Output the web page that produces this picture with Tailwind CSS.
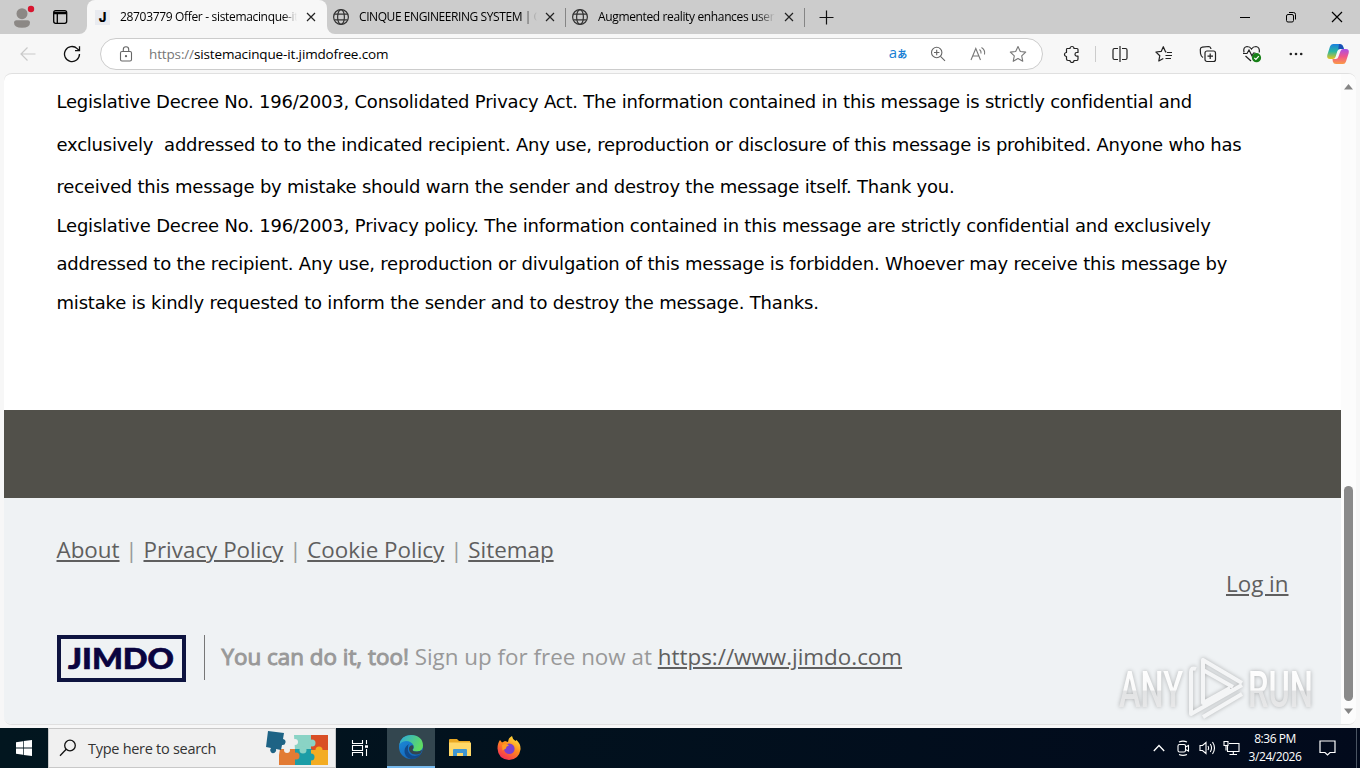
<!DOCTYPE html>
<html lang="en">
<head>
  <meta charset="UTF-8">
  <meta name="viewport" content="width=device-width, initial-scale=1.0">
  <title>28703779 Offer - sistemacinque-it</title>
  <script src="https://cdn.jsdelivr.net/npm/@tailwindcss/browser@4"></script>
</head>
<body class="w-[1360px] h-[768px] overflow-hidden flex flex-col bg-[#f7f7f7] font-['Open_Sans',sans-serif] text-black">

  <!-- shared icons -->
  <svg width="0" height="0" class="absolute">
    <symbol id="globe" viewBox="0 0 18 18"><g fill="none" stroke="#333" stroke-width="1.2"><circle cx="9" cy="9" r="7.4"/><ellipse cx="9" cy="9" rx="3.4" ry="7.4"/><path d="M2.3 6.2h13.4M2.3 11.8h13.4"/></g></symbol>
    <symbol id="close" viewBox="0 0 10 10"><path d="M1 1l8 8M9 1l-8 8" stroke="#222" stroke-width="1.2" fill="none"/></symbol>
  </svg>

  <!-- tab strip -->
  <div class="h-[34px] flex shrink-0 bg-[#f7f7f7] text-[12px]">
    <div class="w-[87px] bg-[#ccc] rounded-br-lg flex items-center pl-2.5">
      <svg width="26" height="26" viewBox="0 0 26 26"><circle cx="12" cy="9.7" r="5.5" fill="#8c8885"/><path d="M4 18.700q0-2.500 2.500-2.500h11q2.500 0 2.500 2.500 0 5-8 5t-8-5z" fill="#8c8885"/><circle cx="21" cy="5" r="3.200" fill="#d8152f"/></svg>
      <svg class="ml-4" width="16" height="16" viewBox="0 0 16 16" fill="none" stroke="#000" stroke-width="1.300"><rect x="1.700" y="1.700" width="13" height="12.600" rx="2"/><path d="M2 3.300h12.500M2 4.600h12.500M5.300 5v9"/></svg>
    </div>
    <div class="w-[240px] bg-[#ccc]">
      <div class="h-full bg-[#f7f7f7] rounded-t-lg flex items-center pl-2">
        <div class="size-[15px] bg-[#e9ebf0] font-extrabold text-[13px] leading-[14px] text-center font-['Inter',sans-serif]">J</div>
        <div class="ml-2.5 w-[177px] overflow-hidden whitespace-nowrap tracking-[-0.33px] mask-r-from-92%">28703779 Offer - sistemacinque-it</div>
        <svg class="ml-[9px]" width="10" height="10"><use href="#close"/></svg>
      </div>
    </div>
    <div class="flex-1 bg-[#ccc] rounded-bl-lg flex items-center">
      <svg class="ml-[5px]" width="18" height="18"><use href="#globe"/></svg>
      <div class="ml-[9px] w-[178px] overflow-hidden whitespace-nowrap tracking-[-0.42px] mask-r-from-92%">CINQUE ENGINEERING SYSTEM | O</div>
      <svg class="ml-2" width="10" height="10"><use href="#close"/></svg>
      <div class="ml-2.5 w-px h-[19px] bg-[#858585]"></div>
      <svg class="ml-[5px]" width="18" height="18"><use href="#globe"/></svg>
      <div class="ml-[9px] w-[177px] overflow-hidden whitespace-nowrap tracking-[-0.36px] mask-r-from-90%">Augmented reality enhances user</div>
      <svg class="ml-[9px]" width="10" height="10"><use href="#close"/></svg>
      <div class="ml-2.5 w-px h-[19px] bg-[#858585]"></div>
      <svg class="ml-[14px]" width="15" height="15" stroke="#111" stroke-width="1.200"><path d="M7.500 .5v14M.5 7.500h14"/></svg>
      <div class="ml-auto flex">
        <div class="w-[46px] flex justify-center"><svg width="12" height="12" stroke="#000" fill="none"><path d="M1 6.500h10"/></svg></div>
        <div class="w-[46px] flex justify-center"><svg width="12" height="12" stroke="#000" fill="none"><rect x="1.500" y="3.500" width="7" height="7.500" rx="1.500"/><path d="M4 1.500h4.500q2 0 2 2v5"/></svg></div>
        <div class="w-[46px] flex justify-center"><svg width="12" height="12" stroke="#000" stroke-width="1.200"><path d="M1 1l10 10M11 1L1 11"/></svg></div>
      </div>
    </div>
  </div>

  <!-- address bar -->
  <div class="h-[39px] shrink-0 flex items-center pl-1.5">
    <div class="w-11 flex justify-center"><svg width="18" height="16" viewBox="0 0 18 16" fill="none" stroke="#c9c9c9" stroke-width="1.200"><path d="M16.500 8H2M8.500 1.500L2 8l6.500 6.500"/></svg></div>
    <div class="w-11 flex justify-center"><svg width="18" height="18" viewBox="0 0 18 18" fill="none" stroke="#111" stroke-width="1.300"><path d="M16.500 9a7.500 7.500 0 1 1-2.300-5.400l2 2M16.500 1.200v4.500h-4.500"/></svg></div>
    <div class="ml-1.5 w-[943px] shrink-0 h-8 rounded-full border border-[#ccc] bg-white flex items-center pl-[18px] pr-1 mt-px">
      <svg width="14" height="16" viewBox="0 0 14 16" fill="none" stroke="#666" stroke-width="1.100"><rect x="1.500" y="5.500" width="11" height="9.500" rx="1.500"/><path d="M4.300 5.500v-2a2.700 2.700 0 0 1 5.400 0v2"/><circle cx="7" cy="10.200" r=".6" fill="#666"/></svg>
      <div class="ml-[16px] text-[13.5px] whitespace-nowrap tracking-[-0.14px]"><span class="text-[#767676]">https://</span>sistemacinque-it.jimdofree.com</div>
      <div class="ml-auto flex items-center">
        <div class="w-10 -mt-[3px] text-center text-[#1a7fd4] text-[15px] leading-none whitespace-nowrap">a<span class="text-[10px] font-bold font-['Noto_Sans_CJK_JP',sans-serif]">あ</span></div>
        <div class="w-10 flex justify-center"><svg width="16" height="16" viewBox="0 0 16 16" fill="none" stroke="#666" stroke-width="1.100"><circle cx="6.700" cy="6.500" r="5.200"/><path d="M10.500 10.300l4.500 4.500M4 6.500h5.400M6.700 3.800v5.400"/></svg></div>
        <div class="w-10 flex justify-center"><svg width="18" height="16" viewBox="0 0 18 16" fill="none" stroke="#777" stroke-width="1.100"><path d="M2 14L6.800 2.500 11.500 14M3.600 10h6.400M10.500 3.500q2 1.500 1.500 4M12.500 1.500q4 2.500 3 7"/></svg></div>
        <div class="w-10 flex justify-center"><svg width="18" height="18" viewBox="0 0 18 18" fill="none" stroke="#777" stroke-width="1.100" stroke-linejoin="round"><path d="M9 1.500l2.300 5 5.400.6-4 3.700 1.100 5.500L9 13.600l-4.800 2.700 1.100-5.500-4-3.700 5.400-.6z"/></svg></div>
      </div>
    </div>
    <div class="ml-[7px] w-11 shrink-0 flex justify-center"><svg width="18" height="18" viewBox="0 0 18 18" fill="none" stroke="#222" stroke-width="1.200" stroke-linejoin="round"><path d="M4 3.500h3a2 2 0 0 1 4 0h3q1 0 1 1v3h-1.200a1.800 1.800 0 0 0 0 3.600H15v3q0 1.400-1 1.400h-3a2 2 0 0 1-4 0H5q-1.500 0-1.500-1.400v-2.600a2 2 0 0 1 0-4V4.500q0-1 .5-1z"/></svg></div>
    <div class="w-px ml-px mr-[2px] shrink-0 h-4 bg-[#ccc]"></div>
    <div class="w-11 shrink-0 flex justify-center"><svg width="18" height="18" viewBox="0 0 18 18" fill="none" stroke="#222" stroke-width="1.200"><path d="M7 3.500H3.500Q2 3.500 2 5v8q0 1.500 1.500 1.500H7M11 3.500h3.500Q16 3.500 16 5v8q0 1.500-1.500 1.500H11M9 1v16"/></svg></div>
    <div class="w-11 shrink-0 flex justify-center"><svg width="18" height="18" viewBox="0 0 18 18" fill="none" stroke="#222" stroke-width="1.200" stroke-linejoin="round"><path d="M11.500 7l-1-.2L8.300 1.700 6.200 6.400.9 7l3.900 3.700-1 5.300 4.500-2.500M12 7.500h5M10.500 10.500H17M10.500 13.500H16"/></svg></div>
    <div class="w-11 shrink-0 flex justify-center"><svg width="18" height="18" viewBox="0 0 18 18" fill="none" stroke="#222" stroke-width="1.200"><rect x="6" y="6" width="10.500" height="10.500" rx="2"/><path d="M11.200 8.500v5.500M8.500 11.200H14M4 12.500Q1.800 11 1.500 8.500L1.300 4.500q0-2 2-2.300L9.500 1.500q2 0 2.500 2.500"/></svg></div>
    <div class="w-11 shrink-0 flex justify-center"><svg width="20" height="18" viewBox="0 0 20 18" fill="none" stroke="#222" stroke-width="1.200"><path d="M2 7.500Q.8 2 5 1.500q3 0 4.500 2.500Q11 1.500 14 1.500q4 .5 3.300 6M1 8.500h4l2-3.500 3 6 1.500-3h2M3.500 11l5.500 5"/><circle cx="14.500" cy="12.700" r="4.600" fill="#178017" stroke="none"/><path d="M12.300 12.800l1.600 1.600 2.900-3.200" stroke="#fff"/></svg></div>
    <div class="w-11 shrink-0 flex justify-center"><svg width="16" height="6" fill="#222"><circle cx="2.800" cy="3" r="1.300"/><circle cx="8" cy="3" r="1.300"/><circle cx="13.200" cy="3" r="1.300"/></svg></div>
    <svg width="24" height="22" viewBox="0 0 24 22" class="ml-[8px] shrink-0">
      <defs>
        <linearGradient id="cpA" x1="0" y1="0" x2="0" y2="1"><stop offset="0" stop-color="#1a7fe0"/><stop offset=".5" stop-color="#2bb7a0"/><stop offset="1" stop-color="#e9c51c"/></linearGradient>
        <linearGradient id="cpB" x1="0" y1="0" x2="0" y2="1"><stop offset="0" stop-color="#a84fe8"/><stop offset=".5" stop-color="#f0568c"/><stop offset="1" stop-color="#fb9a45"/></linearGradient>
      </defs>
      <path d="M7 1h7q2.500 0 3.200 2.600l.8 2.400h-4q-2 0-2.700 2.200L9.500 14q-.8 2-2.700 2H4q-3.500 0-2.700-4L4 3.500Q4.800 1 7 1z" fill="url(#cpA)"/>
      <path d="M17 21h-7q-2.500 0-3.200-2.600L6.500 16h3.200q2 0 2.700-2.200L14.500 8q.8-2 2.700-2H20q3.500 0 2.700 4L20 18.500q-.8 2.500-3 2.500z" fill="url(#cpB)"/>
      <path d="M13 1q3.200 0 4 2.600l.8 2.400H14q-1.200 0-1.800.8z" fill="#1c4fb5"/>
    </svg>
  </div>

  <!-- page -->
  <div class="mx-1 h-[652px] shrink-0 flex rounded-lg overflow-hidden border-t border-b border-[#e0e0e0] bg-white">
    <div class="w-[1337px] flex flex-col">
      <div class="h-[336px] shrink-0 pl-[52.500px] pt-[7px] font-['DejaVu_Sans',Verdana,sans-serif] text-[18px] whitespace-nowrap tracking-[-0.215px]">
        <div class="leading-[42.500px]">
          <p>Legislative Decree No. 196/2003, Consolidated Privacy Act. The information contained in this message is strictly confidential and</p>
          <p class="tracking-[-0.23px]">exclusively&nbsp; addressed to to the indicated recipient. Any use, reproduction or disclosure of this message is prohibited. Anyone who has</p>
          <p>received this message by mistake should warn the sender and destroy the message itself. Thank you.</p>
        </div>
        <div class="leading-[38.400px] -mt-[1.800px]">
          <p class="tracking-[-0.205px]">Legislative Decree No. 196/2003, Privacy policy. The information contained in this message are strictly confidential and exclusively</p>
          <p>addressed to the recipient. Any use, reproduction or divulgation of this message is forbidden. Whoever may receive this message by</p>
          <p class="tracking-[-0.19px]">mistake is kindly requested to inform the sender and to destroy the message. Thanks.</p>
        </div>
      </div>
      <div class="h-[88px] shrink-0 bg-[#51504a]"></div>
      <div class="flex-1 bg-[#eff2f4] px-[52.500px] pt-[35px] text-[22.400px] leading-[34px] text-[#999]">
        <div class="whitespace-nowrap"><a class="underline text-[#5f5f5f]">About</a> | <a class="underline text-[#5f5f5f]">Privacy Policy</a> | <a class="underline text-[#5f5f5f]">Cookie Policy</a> | <a class="underline text-[#5f5f5f]">Sitemap</a></div>
        <div class="text-right"><a class="underline text-[#5f5f5f]">Log in</a></div>
        <div class="mt-[34px] flex items-center">
          <div class="w-[129px] h-[47px] border-[4px] border-[#0e1440] flex items-center justify-center">
            <svg width="112" height="34"><text x="3" y="27" textLength="106" lengthAdjust="spacingAndGlyphs" font-family="Lato" font-weight="900" font-size="28" fill="#0a0440" stroke="#0a0440" stroke-width=".6">JIMDO</text></svg>
          </div>
          <div class="ml-[18px] -mt-0.5 w-px h-[45px] bg-[#777]"></div>
          <p class="ml-[17px] whitespace-nowrap -mt-[3px]"><b class="font-normal [-webkit-text-stroke:1px_#999]">You can do it, too!</b> Sign up for free now at <a class="underline text-[#5f5f5f]">https://www.jimdo.com</a></p>
        </div>
      </div>
    </div>
    <div class="w-[15px] bg-[#fcfcfc] flex flex-col items-center">
      <svg class="mt-2.5" width="9" height="6"><path d="M0 5.500L4.500 0 9 5.500z" fill="#858585"/></svg>
      <div class="mt-[396px] w-[9px] h-[215px] rounded-full bg-[#8a8a8a]"></div>
      <svg class="mt-[7px]" width="9" height="6"><path d="M0 .5h9L4.500 6z" fill="#858585"/></svg>
    </div>
  </div>

  <!-- watermark -->
  <svg class="absolute left-[1110px] top-[650px]" width="210" height="76" viewBox="0 0 210 76">
    <defs><linearGradient id="wm" x1="0" y1="0" x2="0" y2="1"><stop offset="0" stop-color="#fff"/><stop offset=".5" stop-color="#fafafa"/><stop offset=".52" stop-color="#e2e3e4"/><stop offset="1" stop-color="#ececed"/></linearGradient></defs>
    <g class="drop-shadow-[0_0_2px_rgba(0,0,0,0.28)]">
      <g font-family="Roboto" font-weight="500" font-size="50" fill="url(#wm)">
        <text x="9" y="57" textLength="64" lengthAdjust="spacingAndGlyphs">ANY</text>
        <text x="138" y="57" textLength="65" lengthAdjust="spacingAndGlyphs">RUN</text>
      </g>
      <g fill="none" stroke="#f4f5f6" stroke-width="4" stroke-linejoin="round">
        <path d="M132 33L93 10v43l27-15M86 19q-5-2-5 3v42l51-29M93 67l39-23M93 20l30 17"/>
      </g>
    </g>
  </svg>

  <!-- taskbar -->
  <div class="mt-[3px] h-10 shrink-0 flex items-center bg-linear-to-r from-[#02161f] to-[#020a1c] text-white">
    <div class="w-12 flex justify-center"><svg width="16" height="16" fill="#fff"><path d="M0 2.200L7 1.200V7.600H0zM7.700 1.100L16 0v7.600H7.700zM0 8.400h7v6.400L0 13.800zM7.700 8.400H16V16l-8.300-1.100z"/></svg></div>
    <div class="w-[288px] h-10 bg-[#f0f0f0] border border-[#c8c8c8] flex items-center text-[#333]">
      <svg class="ml-[10px]" width="18" height="18" fill="none" stroke="#111" stroke-width="1.300"><circle cx="11" cy="6.500" r="5.300"/><path d="M7.200 10.300L1 16.700"/></svg>
      <div class="ml-[11px] mt-0.5 text-[14.500px] tracking-[-0.28px] whitespace-nowrap">Type here to search</div>
      <svg class="ml-auto mr-[6px]" width="64" height="37" viewBox="0 0 64 37">
        <path d="M15 19h16v16H14V25z" fill="#e27b34"/>
        <path d="M29 5h17v15H30z" fill="#8ad3c5"/>
        <path d="M46 5h17v16H46z" fill="#d94e25"/>
        <path d="M30 19h17v16H30z" fill="#1c9da6"/>
        <path d="M46 20h17v15H46z" fill="#f3ac22"/>
        <circle cx="47" cy="13" r="3.500" fill="#8ad3c5"/><circle cx="38" cy="20" r="3.500" fill="#8ad3c5"/><circle cx="54" cy="20" r="3.500" fill="#f3ac22"/><circle cx="46" cy="27" r="3.500" fill="#1c9da6"/><circle cx="31" cy="26" r="3.500" fill="#e27b34"/><circle cx="30" cy="12" r="3" fill="#f0f0f0"/><circle cx="22" cy="20" r="3" fill="#f0f0f0"/>
        <path d="M3 1l16 2-1 6a3 3 0 1 1-1 6l-1 5-5-1a3 3 0 1 1-5-1l-5-1z" fill="#1e6385"/>
      </svg>
    </div>
    <div class="w-[48px] mr-[3px] flex justify-center"><svg width="18" height="16" viewBox="0 0 18 16" fill="none" stroke="#fff" stroke-width="1.100"><path d="M1.500 0v3.500h10V0M1.500 16v-3.500h10V16M1.500 5.500h10v5h-10zM15.500 0v4M15.500 9v7"/><rect x="14" y="5.300" width="3" height="2.500" fill="#fff" stroke="none"/></svg></div>
    <div class="w-12 h-10 bg-[#33464f] border-b-2 border-[#76b9ed] flex justify-center items-center">
      <svg width="24" height="24" viewBox="0 0 24 24">
        <defs>
          <linearGradient id="egA" x1="0" y1="0" x2="1" y2=".4"><stop offset="0" stop-color="#2ba6e0"/><stop offset="1" stop-color="#5fdc62"/></linearGradient>
          <linearGradient id="egB" x1="0" y1="0" x2=".6" y2="1"><stop offset="0" stop-color="#1c8fdc"/><stop offset="1" stop-color="#1565b8"/></linearGradient>
        </defs>
        <circle cx="12" cy="12" r="12" fill="url(#egB)"/>
        <path d="M.3 10Q2 0 12 0q11.500.5 12 10.500 0 5.500-6 6-4 0-4.500-1.500 2-2 1-4.500Q12.500 6 7 6 2 6.500.3 10z" fill="url(#egA)"/>
        <path d="M9 12q-1 6 4 8.500 5 1.500 9.500-2-4 5.500-10.500 5.500Q5 22 5.500 15.500 6 11 10 9q-1 1-1 3z" fill="#114a8b"/>
        <path d="M14.300 10.500q.8 2.500-.9 4.500.9 1.800 5 1.600 3-.2 4.800-1.600l-1.500 3.300q-4.500 2.200-8.700.4-3.500-2.200-3-6 1.300-3.500 4.300-2.200z" fill="#33464f"/>
      </svg>
    </div>
    <div class="w-[50px] flex justify-center"><svg width="22" height="20" viewBox="0 0 22 20"><path d="M0 2q0-1 1-1h7l2 2h11v15H0z" fill="#e9a823"/><path d="M0 4.500h22V18H0z" fill="#ffd868"/><path d="M4 18v-6q0-1 1-1h12q1 0 1 1v6h-4v-3H8v3z" fill="#3f96d2"/></svg></div>
    <div class="w-12 flex justify-center"><svg width="24" height="24" viewBox="0 0 24 24">
      <defs><linearGradient id="ff" x1=".8" y1="0" x2=".2" y2="1"><stop offset="0" stop-color="#ffe83f"/><stop offset=".45" stop-color="#ff8a1d"/><stop offset="1" stop-color="#f5245c"/></linearGradient></defs>
      <path d="M3 4l2 2.500L8 5l3 1q0-4 4-6 .5 3.500 3.500 5l1-1Q24 8 23.500 13.500 22 23.500 12 24 1 23 .5 12.500.5 7 3 4z" fill="url(#ff)"/>
      <circle cx="12.300" cy="12.700" r="5.300" fill="#7b3fd0"/><path d="M5 9q4-2 7 .5-3 .5-3 3l-3.500 2z" fill="#ff9a24"/>
    </svg></div>
    <div class="ml-auto flex items-center">
      <svg width="12" height="8" fill="none" stroke="#fff" stroke-width="1.300"><path d="M.8 7L6 1.500 11.200 7"/></svg>
      <svg class="ml-3" width="13" height="16" viewBox="0 0 13 16" fill="none" stroke="#fff" stroke-width="1.100"><rect x="1" y="4.500" width="7.500" height="7.500" rx="1.500"/><path d="M8.500 7l3-1.500v5.500l-3-1.500M2 2Q6 .2 10 2M2 14.500q4 1.700 8 0"/></svg>
      <svg class="ml-[9px]" width="17" height="16" viewBox="0 0 17 16" fill="none" stroke="#fff" stroke-width="1.100"><path d="M1 5.500h2.500L7 2.500v11l-3.500-3H1zM9 6q1.200 2 0 4M11.300 4q2.500 4 0 8M13.500 2q4 6 0 12"/></svg>
      <svg class="ml-[7px]" width="17" height="16" viewBox="0 0 17 16" fill="none" stroke="#fff" stroke-width="1.100"><path d="M6 3.500h10v8H4.500V6M10.300 11.500V14M6.500 14.500h7.500M1 1.500h4v4H1zM3 5.500v5"/></svg>
      <div class="ml-[8px] w-[54px] text-[12px] leading-[18px] text-center whitespace-nowrap tracking-[-0.45px]"><p>8:36 PM</p><p>3/24/2026</p></div>
      <svg class="ml-[17px] mr-[20px]" width="17" height="18" viewBox="0 0 17 18" fill="none" stroke="#fff" stroke-width="1.200"><path d="M1 2h15v11.500h-5L8.500 16 6 13.500H1z"/></svg>
      <div class="w-px h-10 bg-[#4a5462] mr-[3px]"></div>
    </div>
  </div>
</body>
</html>
